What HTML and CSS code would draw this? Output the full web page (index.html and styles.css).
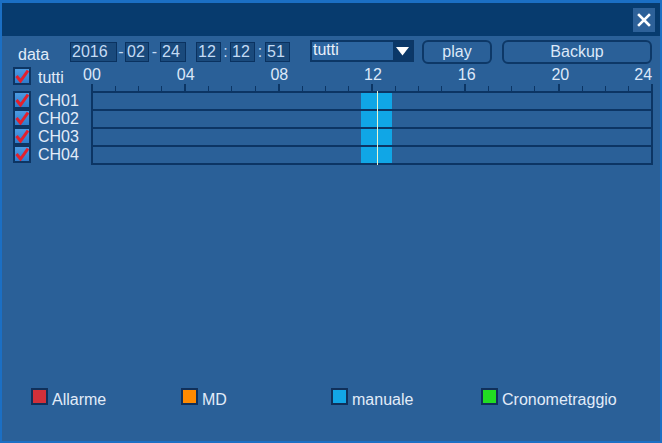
FILE: index.html
```html
<!DOCTYPE html>
<html>
<head>
<meta charset="utf-8">
<link rel="stylesheet" href="styles.css">
</head>
<body>
<div class="window">
  <div class="titlebar">
    <button class="close" aria-label="close">
      <svg width="14" height="14" viewBox="0 0 14 14"><path d="M2 2 L12 12 M12 2 L2 12" stroke="#ffffff" stroke-width="2.6" stroke-linecap="square" fill="none"/></svg>
    </button>
  </div>

  <div class="toolbar">
    <span class="lbl-data">data</span>
    <span class="field f-year">2016</span><span class="sep sep-a">-</span>
    <span class="field f-mon">02</span><span class="sep sep-b">-</span>
    <span class="field f-day">24</span>
    <span class="field f-h">12</span><span class="sep sep-c">:</span>
    <span class="field f-m">12</span><span class="sep sep-d">:</span>
    <span class="field f-s">51</span>
    <div class="select">
      <span class="select-text">tutti</span>
      <span class="select-arrow"><svg width="13" height="9" viewBox="0 0 13 9"><path d="M0 0 H13 L6.5 8.5 Z" fill="#ffffff"/></svg></span>
    </div>
    <button class="btn btn-play">play</button>
    <button class="btn btn-backup">Backup</button>
  </div>

  <div class="schedule">
    <div class="left-col">
      <div class="head-row">
        <span class="cb"><svg width="14" height="14" viewBox="0 0 14 14"><path d="M1.5 7 L5.5 12 L13 1.5" stroke="#e3202c" stroke-width="3" fill="none"/></svg></span>
        <span class="head-label">tutti</span>
      </div>
      <div class="ch-row"><span class="cb"><svg width="14" height="14" viewBox="0 0 14 14"><path d="M1.5 7 L5.5 12 L13 1.5" stroke="#e3202c" stroke-width="3" fill="none"/></svg></span><span class="ch-label">CH01</span></div>
      <div class="ch-row"><span class="cb"><svg width="14" height="14" viewBox="0 0 14 14"><path d="M1.5 7 L5.5 12 L13 1.5" stroke="#e3202c" stroke-width="3" fill="none"/></svg></span><span class="ch-label">CH02</span></div>
      <div class="ch-row"><span class="cb"><svg width="14" height="14" viewBox="0 0 14 14"><path d="M1.5 7 L5.5 12 L13 1.5" stroke="#e3202c" stroke-width="3" fill="none"/></svg></span><span class="ch-label">CH03</span></div>
      <div class="ch-row"><span class="cb"><svg width="14" height="14" viewBox="0 0 14 14"><path d="M1.5 7 L5.5 12 L13 1.5" stroke="#e3202c" stroke-width="3" fill="none"/></svg></span><span class="ch-label">CH04</span></div>
    </div>

    <div class="right-col">
      <div class="ruler">
        <div class="ruler-labels">
          <div class="rl-cell"><span class="rl">00</span></div>
          <div class="rl-cell"><span class="rl">04</span></div>
          <div class="rl-cell"><span class="rl">08</span></div>
          <div class="rl-cell"><span class="rl">12</span></div>
          <div class="rl-cell"><span class="rl">16</span></div>
          <div class="rl-cell rl-last"><span class="rl">20</span><span class="rl-end">24</span></div>
        </div>
        <div class="ruler-ticks">
          <i class="tk major"></i><i class="tk"></i><i class="tk"></i><i class="tk"></i>
          <i class="tk major"></i><i class="tk"></i><i class="tk"></i><i class="tk"></i>
          <i class="tk major"></i><i class="tk"></i><i class="tk"></i><i class="tk"></i>
          <i class="tk major"></i><i class="tk"></i><i class="tk"></i><i class="tk"></i>
          <i class="tk major"></i><i class="tk"></i><i class="tk"></i><i class="tk"></i>
          <i class="tk major"></i><i class="tk"></i><i class="tk"></i><i class="tk"></i>
          <i class="tk major"></i>
        </div>
      </div>
      <div class="tracks">
        <div class="track"><div class="seg" style="margin-left:268px;width:31px"></div></div>
        <div class="track"><div class="seg" style="margin-left:268px;width:31px"></div></div>
        <div class="track"><div class="seg" style="margin-left:268px;width:31px"></div></div>
        <div class="track track-last"><div class="seg" style="margin-left:268px;width:31px"></div></div>
        <div class="cursor" style="left:286px"></div>
      </div>
    </div>
  </div>

  <div class="legend">
    <div class="lg-item"><span class="sw sw-red"></span><span class="lg-text">Allarme</span></div>
    <div class="lg-item"><span class="sw sw-orange"></span><span class="lg-text">MD</span></div>
    <div class="lg-item"><span class="sw sw-cyan"></span><span class="lg-text">manuale</span></div>
    <div class="lg-item"><span class="sw sw-green"></span><span class="lg-text">Cronometraggio</span></div>
  </div>
</div>
</body>
</html>
```

FILE: styles.css
```css
* { box-sizing: border-box; }

html, body {
  margin: 0;
  padding: 0;
  background: #2a6098;
}

body {
  font-family: "Liberation Sans", Arial, sans-serif;
  font-size: 16px;
  line-height: 18px;
  color: #e2ecf8;
}

.window {
  width: 662px;
  height: 443px;
  background: #2a6098;
  border-style: solid;
  border-color: #1b6fc4;
  border-width: 3px 2px 2px 2px;
  display: flex;
  flex-direction: column;
}

/* title bar */
.titlebar {
  height: 33px;
  background: #073b6e;
  display: flex;
  justify-content: flex-end;
  align-items: center;
  padding-right: 5px;
  flex: none;
}

.close {
  width: 22px;
  height: 24px;
  border: none;
  padding: 0;
  margin: 0;
  background: #2d6199;
  display: flex;
  align-items: center;
  justify-content: center;
}

/* toolbar */
.toolbar {
  margin-top: 4px;
  height: 24px;
  display: flex;
  align-items: center;
  padding-left: 16px;
  flex: none;
}

.lbl-data {
  width: 52px;
  margin-top: 5px;
  color: #e2ecf8;
}

.field {
  height: 20px;
  background: #1a4a7c;
  border: 1px solid #0a3260;
  color: #c4dbf4;
  padding-left: 1px;
  line-height: 18px;
  flex: none;
}

.f-year { width: 47px; }
.f-mon { width: 24px; }
.f-day { width: 26px; }
.f-h { width: 25px; margin-left: 10px; }
.f-m { width: 25px; }
.f-s { width: 25px; }

.sep {
  flex: none;
  text-align: center;
  color: #c4dbf4;
}
.sep-a { width: 8px; }
.sep-b { width: 11px; }
.sep-c { width: 9px; }
.sep-d { width: 10px; }

.select {
  margin-left: 20px;
  width: 104px;
  height: 22px;
  border: 2px solid #0c3766;
  display: flex;
  flex: none;
  margin-top: -2px;
}

.select-text {
  flex: 1;
  background: #2c65a0;
  color: #e8f0fa;
  padding-left: 1px;
  line-height: 16px;
}

.select-arrow {
  width: 19px;
  background: #0b3868;
  display: flex;
  align-items: center;
  justify-content: center;
}

.btn {
  height: 24px;
  border: 2px solid #0d3867;
  border-radius: 6px;
  background: #2a6098;
  color: #dce8f8;
  font-family: "Liberation Sans", Arial, sans-serif;
  font-size: 16px;
  line-height: 18px;
  padding: 0;
  flex: none;
}

.btn-play { width: 70px; margin-left: 8px; }
.btn-backup { width: 150px; margin-left: 10px; }

/* schedule */
.schedule {
  display: flex;
  padding-left: 11px;
  margin-top: 1px;
  flex: none;
}

.left-col {
  width: 78px;
  display: flex;
  flex-direction: column;
}

.head-row {
  height: 26px;
  display: flex;
  align-items: flex-start;
}

.head-row .cb { margin-top: 2px; }

.head-label {
  margin-left: 7px;
  margin-top: 4px;
}

.ch-row {
  height: 18px;
  display: flex;
  align-items: center;
}

.ch-label {
  margin-left: 7px;
  color: #e2ecf8;
  padding-top: 2px;
}

.cb {
  width: 18px;
  height: 18px;
  border: 2px solid #0d3563;
  background: linear-gradient(#4c9be2, #2f7ccb);
  display: flex;
  align-items: center;
  justify-content: center;
  flex: none;
}

.right-col {
  width: 562px;
  display: flex;
  flex-direction: column;
}

.ruler {
  height: 26px;
  display: flex;
  flex-direction: column;
}

.ruler-labels {
  height: 19px;
  padding-top: 1px;
  display: flex;
}

.rl-cell {
  flex: 1;
  display: flex;
}

.rl-last {
  justify-content: space-between;
}

.rl {
  width: 20px;
  margin-left: -9px;
  text-align: center;
  color: #dce8f8;
}

.rl-end {
  color: #dce8f8;
  margin-right: 1px;
}

.ruler-ticks {
  height: 7px;
  display: flex;
  justify-content: space-between;
  align-items: flex-end;
}

.tk {
  display: block;
  width: 1px;
  height: 5px;
  background: #0c3564;
}

.tk.major {
  width: 2px;
  height: 7px;
}

.tracks {
  position: relative;
}

.track {
  height: 18px;
  border-style: solid;
  border-color: #0c3564;
  border-width: 2px 2px 0 2px;
  display: flex;
}

.track-last {
  height: 20px;
  border-bottom-width: 2px;
}

.seg {
  height: 100%;
  background: #10a6e6;
}

.cursor {
  position: absolute;
  top: 0;
  bottom: 0;
  width: 1px;
  background: #eaf6cf;
}

/* legend */
.legend {
  margin-top: auto;
  padding-left: 29px;
  padding-bottom: 32px;
  display: flex;
}

.lg-item {
  width: 150px;
  display: flex;
  align-items: baseline;
  flex: none;
}

.sw {
  width: 17px;
  height: 17px;
  border: 2px solid #10305a;
  margin-right: 4px;
  flex: none;
}

.sw-red { background: #d2303a; }
.sw-orange { background: #ff8a00; }
.sw-cyan { background: #12a6e6; }
.sw-green { background: #22dd22; }

.lg-text {
  color: #e2ecf8;
}
```
